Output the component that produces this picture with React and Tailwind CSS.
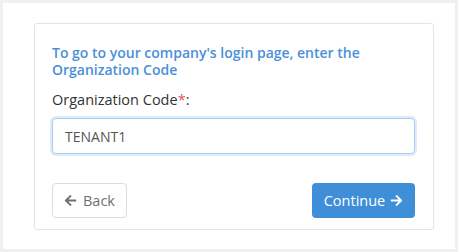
import React from "react";
import { FaArrowLeft, FaArrowRight } from "react-icons/fa";

export default function App() {
  return (
    <div
      className="w-[458px] h-[252px] border-[3px] border-[#f0f0f0] bg-white pt-[20px] pl-[31px]"
      style={{ fontFamily: '"Open Sans", "Noto Sans", sans-serif' }}
    >
      <div className="w-[400px] h-[207px] border border-[#e4e4e4] rounded-[3px] px-[17px] pt-[20px]">
        <h1 className="text-[14px] leading-[17px] font-semibold text-[#4a90d9]">
          To go to your company's login page, enter the Organization Code
        </h1>
        <label className="block mt-[13px] text-[14.5px] leading-[18px] text-[#333]">
          Organization Code<span className="text-[#e0505a]">*</span>:
        </label>
        <div className="mt-[9px] h-[36px] w-[363px] rounded-[4px] border border-[#a9cbef] shadow-[0_0_0_2px_rgba(102,163,230,0.22)] flex items-center px-[12px] text-[14px] text-[#555]">
          TENANT1
        </div>
        <div className="mt-[29px] flex justify-between w-[363px]">
          <button className="h-[35px] w-[75px] rounded-[4px] border border-[#dcdcdc] bg-white text-[#6f6f6f] text-[14.5px] flex items-center justify-center gap-[6px]">
            <FaArrowLeft className="w-[13px] h-[13px]" />
            <span>Back</span>
          </button>
          <button className="h-[35px] w-[103px] rounded-[4px] bg-[#3f8fd8] text-white text-[14.5px] flex items-center justify-center gap-[5px]">
            <span>Continue</span>
            <FaArrowRight className="w-[13px] h-[13px]" />
          </button>
        </div>
      </div>
    </div>
  );
}
